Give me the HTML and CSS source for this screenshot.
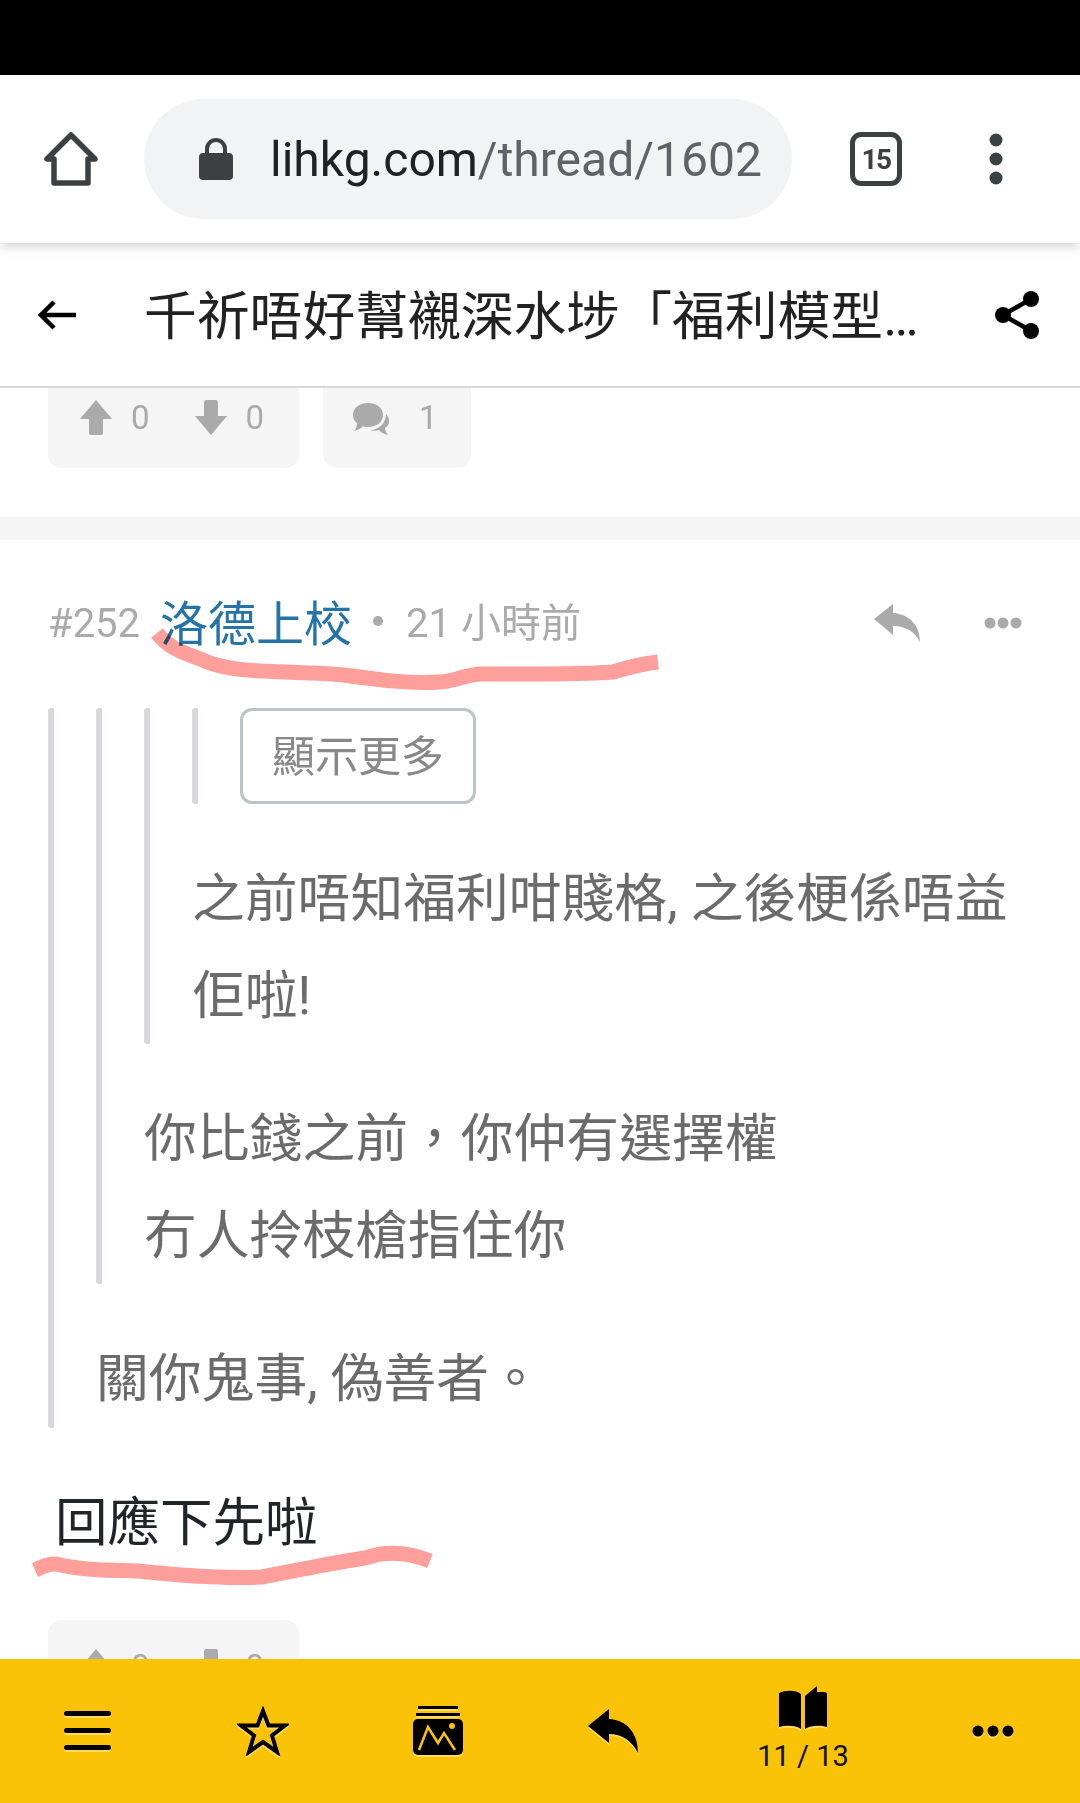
FILE: index.html
```html
<!DOCTYPE html>
<html lang="zh-Hant">
<head>
    <meta charset="UTF-8">
    <meta name="viewport" content="width=device-width, initial-scale=1.0">
    <title>千祈唔好幫襯深水埗「福利模型」</title>
    <link rel="stylesheet" href="styles.css">
</head>
<body>

<div class="statusBar"></div>

<!-- browser toolbar -->
<div class="browserBar">
    <svg class="homeIcon" width="54" height="54" viewBox="0 0 54 54"><path d="M27 3 L3 27 H10 V51 H44 V27 H51 Z" fill="none" stroke="#3c4043" stroke-width="5.5" stroke-linejoin="round"/></svg>
    <div class="urlPill">
        <svg class="lockIcon" width="34" height="42" viewBox="0 0 34 42"><path d="M8 17 V11 a9 9 0 0 1 18 0 V17" fill="none" stroke="#3c4043" stroke-width="4"/><rect x="0" y="15" width="34" height="27" rx="4" fill="#3c4043"/></svg>
        <span class="urlText">lihkg.com<span class="urlPath">/thread/1602</span></span>
    </div>
    <div class="tabCount">15</div>
    <svg class="menuDots" width="14" height="52" viewBox="0 0 14 52"><circle cx="7" cy="7" r="6.5" fill="#3c4043"/><circle cx="7" cy="26" r="6.5" fill="#3c4043"/><circle cx="7" cy="45" r="6.5" fill="#3c4043"/></svg>
</div>

<!-- thread title -->
<div class="titleBar">
    <svg class="backIcon" width="38" height="30" viewBox="0 0 38 30"><path d="M16 2 L3 15 L16 28 M3 15 H38" fill="none" stroke="#000" stroke-width="4.5"/></svg>
    <div class="threadTitle">千祈唔好幫襯深水埗「福利模型…</div>
    <svg class="shareIcon" width="46" height="50" viewBox="0 0 46 50"><path d="M37 9 L9 25 L37 41" fill="none" stroke="#000" stroke-width="4.5"/><circle cx="37" cy="9" r="8" /><circle cx="9" cy="25" r="8"/><circle cx="37" cy="41" r="8"/></svg>
</div>

<div class="content">
    <div class="statsRow">
        <div class="statBox voteBox">
            <svg width="32" height="35" viewBox="0 0 32 35"><path d="M16 0 L32 19 H23 V33 a2 2 0 0 1 -2 2 H11 a2 2 0 0 1 -2 -2 V19 H0 Z" fill="#aaa"/></svg>
            <span class="statNum">0</span>
            <svg class="downVote" width="32" height="35" viewBox="0 0 32 35"><path d="M16 35 L32 16 H23 V2 a2 2 0 0 0 -2 -2 H11 a2 2 0 0 0 -2 2 V16 H0 Z" fill="#aaa"/></svg>
            <span class="statNum">0</span>
        </div>
        <div class="statBox commentBox">
            <svg width="36" height="32" viewBox="0 0 36 32"><path d="M15 0 C24 0 30 5 30 12 C30 19 24 24 15 24 C13 24 11 24 10 23 C8 26 4 27 1 28 C3 26 4 23 4 20 C1 18 0 15 0 12 C0 5 6 0 15 0 Z" fill="#aaa"/><path d="M33 11 C35 13 36 15 36 18 C36 21 35 23 32 25 C32 27 33 30 35 32 C32 31 28 30 26 27 C23 28 20 28 17 27 C26 27 33 20 33 11 Z" fill="#aaa"/></svg>
            <span class="statNum commentNum">1</span>
        </div>
    </div>

    <div class="separator"></div>

    <div class="post">
        <div class="postHeader">
            <span class="postNum">#252</span>
            <span class="userName">洛德上校</span>
            <span class="metaDot"></span>
            <span class="postTime">21 小時前</span>
            <svg class="replySmall" width="46" height="38" viewBox="0 0 46 38"><path d="M0 15 L19 0 V9 C36 10 46 22 46 38 C41 28 32 22 19 22 V31 Z" fill="#aaa"/></svg>
            <svg class="moreSmall" width="38" height="12" viewBox="0 0 38 12"><circle cx="6" cy="6" r="5.5" fill="#aaa"/><circle cx="19" cy="6" r="5.5" fill="#aaa"/><circle cx="32" cy="6" r="5.5" fill="#aaa"/></svg>
        </div>

        <div class="quote">
            <div class="quote">
                <div class="quote">
                    <div class="quote lastQuote">
                        <button class="moreBtn">顯示更多</button>
                    </div>
                    <p class="quoteText">之前唔知福利咁賤格, 之後梗係唔益<br>佢啦!</p>
                </div>
                <p class="quoteText">你比錢之前，你仲有選擇權<br>冇人拎枝槍指住你</p>
            </div>
            <p class="quoteText">關你鬼事, 偽善者。</p>
        </div>

        <p class="postText">回應下先啦</p>

        <div class="statsRow nextStats">
            <div class="statBox voteBox">
                <svg width="32" height="35" viewBox="0 0 32 35"><path d="M16 0 L32 19 H23 V33 a2 2 0 0 1 -2 2 H11 a2 2 0 0 1 -2 -2 V19 H0 Z" fill="#aaa"/></svg>
                <span class="statNum">0</span>
                <svg class="downVote" width="32" height="35" viewBox="0 0 32 35"><path d="M16 35 L32 16 H23 V2 a2 2 0 0 0 -2 -2 H11 a2 2 0 0 0 -2 2 V16 H0 Z" fill="#aaa"/></svg>
                <span class="statNum">0</span>
            </div>
        </div>
    </div>

    <!-- hand drawn marks over the screenshot -->
    <svg class="inkLayer" width="1080" height="1415" viewBox="0 388 1080 1415">
        <path d="M157 633 C172 652 190 654 207 662 C240 674 275 670 344 675 C380 680 410 684 440 682 C455 682 465 674 482 674 C520 674 570 675 613 672 C630 667 640 664 658 662" fill="none" stroke="#ff9f9b" stroke-width="15"/>
        <path d="M35 1570 C42 1567 48 1563 56 1564 C85 1571 115 1570 138 1571 C175 1575 220 1579 262 1577 C295 1571 330 1563 365 1558 C385 1551 405 1551 430 1561" fill="none" stroke="#ff9f9b" stroke-width="15"/>
    </svg>
</div>

<!-- bottom toolbar -->
<div class="bottomBar">
    <div class="barItem">
        <svg width="47" height="40" viewBox="0 0 47 40"><rect x="0" y="0" width="47" height="5" rx="2.5"/><rect x="0" y="17" width="47" height="5" rx="2.5"/><rect x="0" y="34" width="47" height="5" rx="2.5"/></svg>
    </div>
    <div class="barItem">
        <svg width="52" height="50" viewBox="0 0 52 50"><path d="M26 5 L31.5 19.5 L48 19.5 L35 29.5 L40 46 L26 36 L12 46 L17 29.5 L4 19.5 L20.5 19.5 Z" fill="none" stroke="#000" stroke-width="4"/></svg>
    </div>
    <div class="barItem">
        <svg width="50" height="50" viewBox="0 0 50 50"><rect x="5" y="0" width="40" height="3"/><rect x="3" y="7" width="44" height="3"/><rect x="0" y="13" width="50" height="36" rx="5"/><path d="M6 44 L15 21 L25 37 L31 27 L42 44" fill="none" stroke="#fbc308" stroke-width="2.5"/><circle cx="39" cy="20" r="3" fill="#fbc308"/></svg>
    </div>
    <div class="barItem">
        <svg width="50" height="44" viewBox="0 0 50 44"><path d="M0 17 L21 0 V10 C39 11 50 24 50 44 C44 32 34 25 21 25 V34 Z"/></svg>
    </div>
    <div class="barItem bookItem">
        <svg width="50" height="44" viewBox="0 0 50 44"><path d="M1 7 C8 4 18 4 23 8 V43 C18 39 8 39 1 41 Z"/><path d="M27 10 L39 0 V31 L29 39 L39 31 V6 H45 C46 6 49 6 49 8 V41 C42 39 33 39 27 43 Z" fill-rule="evenodd"/></svg>
        <span class="pageNum">11 / 13</span>
    </div>
    <div class="barItem">
        <svg width="42" height="12" viewBox="0 0 42 12"><circle cx="6" cy="6" r="5.5"/><circle cx="21" cy="6" r="5.5"/><circle cx="36" cy="6" r="5.5"/></svg>
    </div>
</div>

</body>
</html>
```

FILE: styles.css
```css
html, body {
    margin: 0;
    padding: 0;
}
body {
    width: 1080px;
    height: 1803px;
    overflow: hidden;
    display: flex;
    flex-direction: column;
    background-color: #fff;
    font-family: Roboto, "Noto Sans CJK TC", sans-serif;
}
.statusBar {
    height: 75px;
    background-color: #000;
}
.browserBar {
    height: 168px;
    position: relative;
    z-index: 3;
    display: flex;
    align-items: center;
    background-color: #fff;
    box-shadow: 0 2px 12px rgba(0, 0, 0, 0.22);
}
.homeIcon {
    margin-left: 44px;
    margin-right: 46px;
}
.urlPill {
    width: 648px;
    height: 120px;
    border-radius: 60px;
    background-color: #f1f3f4;
    display: flex;
    align-items: center;
    box-sizing: border-box;
    padding-left: 55px;
}
.urlText {
    margin-left: 37px;
    font-size: 48px;
    color: #202124;
    white-space: nowrap;
}
.urlPath {
    color: #5f6368;
}
.tabCount {
    margin-left: 58px;
    width: 52px;
    height: 54px;
    box-sizing: border-box;
    border: 5px solid #3c4043;
    border-radius: 11px;
    display: flex;
    align-items: center;
    justify-content: center;
    font-size: 28px;
    font-weight: 700;
    letter-spacing: -1.5px;
    color: #3c4043;
}
.menuDots {
    margin-left: 87px;
}
.titleBar {
    height: 145px;
    box-sizing: border-box;
    border-bottom: 2px solid #d9d9d9;
    position: relative;
    z-index: 2;
    display: flex;
    align-items: center;
    background-color: #fff;
}
.backIcon {
    margin-left: 38px;
}
.threadTitle {
    margin-left: 68px;
    margin-bottom: 6px;
    width: 782px;
    font-size: 52.8px;
    color: #222;
    white-space: nowrap;
}
.shareIcon {
    margin-left: 68px;
    flex-shrink: 0;
}
.content {
    flex: 1;
    position: relative;
    overflow: hidden;
}
.statsRow {
    display: flex;
    gap: 24px;
    padding-left: 48px;
}
.statBox {
    height: 80px;
    box-sizing: border-box;
    padding-top: 12px;
    display: flex;
    align-items: flex-start;
    background-color: #f5f5f5;
    border-radius: 0 0 14px 14px;
}
.voteBox {
    width: 251px;
    padding-left: 32px;
}
.commentBox {
    width: 148px;
    padding-left: 30px;
    padding-top: 15px;
}
.statNum {
    margin-left: 19px;
    font-size: 33px;
    line-height: 35px;
    color: #aaa;
}
.commentNum {
    margin-left: 30px;
    margin-top: -3px;
}
.downVote {
    margin-left: 45px;
}
.separator {
    height: 23px;
    margin-top: 49px;
    background-color: #f5f5f5;
}
.post {
    padding-top: 50px;
}
.postHeader {
    height: 66px;
    margin-bottom: 52px;
    padding-left: 48px;
    display: flex;
    align-items: center;
    font-size: 40px;
    color: #aaa;
}
.userName {
    margin-left: 20px;
    margin-bottom: 6px;
    font-size: 48px;
    color: #2574a9;
}
.metaDot {
    width: 10px;
    height: 10px;
    margin-left: 21px;
    margin-bottom: 4px;
    border-radius: 50%;
    background-color: #aaa;
}
.postTime {
    margin-left: 23px;
    margin-bottom: 6px;
}
.replySmall {
    margin-left: auto;
}
.moreSmall {
    margin-left: 64px;
    margin-right: 58px;
}
.quote {
    border-left: 6px solid #d6dadd;
    border-radius: 3px;
    padding-left: 42px;
}
.post > .quote {
    margin-left: 48px;
}
.lastQuote {
    height: 96px;
    box-sizing: border-box;
}
.moreBtn {
    display: block;
    width: 236px;
    height: 96px;
    padding: 0 0 6px;
    background: #fff;
    border: 3px solid #bcc3c9;
    border-radius: 12px;
    font-family: inherit;
    font-size: 43px;
    color: #888;
}
.quoteText {
    margin: 47px 0 0;
    font-size: 52.8px;
    line-height: 96.5px;
    color: #6b6b6b;
    white-space: nowrap;
}
.postText {
    margin: 47px 0 0;
    padding-left: 55px;
    font-size: 52.5px;
    line-height: 96px;
    color: #212529;
}
.nextStats {
    margin-top: 49px;
}
.nextStats .statBox {
    border-radius: 14px 14px 0 0;
    padding-top: 29px;
}
.inkLayer {
    position: absolute;
    top: 0;
    left: 0;
    mix-blend-mode: multiply;
    pointer-events: none;
}
.bottomBar {
    height: 144px;
    position: relative;
    z-index: 2;
    display: grid;
    grid-template-columns: 175px 175px 175px 175px 206px 174px;
    align-items: center;
    background-color: #fbc308;
}
.barItem {
    display: flex;
    flex-direction: column;
    align-items: center;
    justify-content: center;
}
.barItem svg {
    filter: drop-shadow(0 2px 0 rgba(255, 235, 150, 0.6));
}
.bookItem {
    margin-top: -5px;
}
.pageNum {
    margin-top: 10px;
    font-size: 29px;
    line-height: 32px;
    color: #111;
}
```
